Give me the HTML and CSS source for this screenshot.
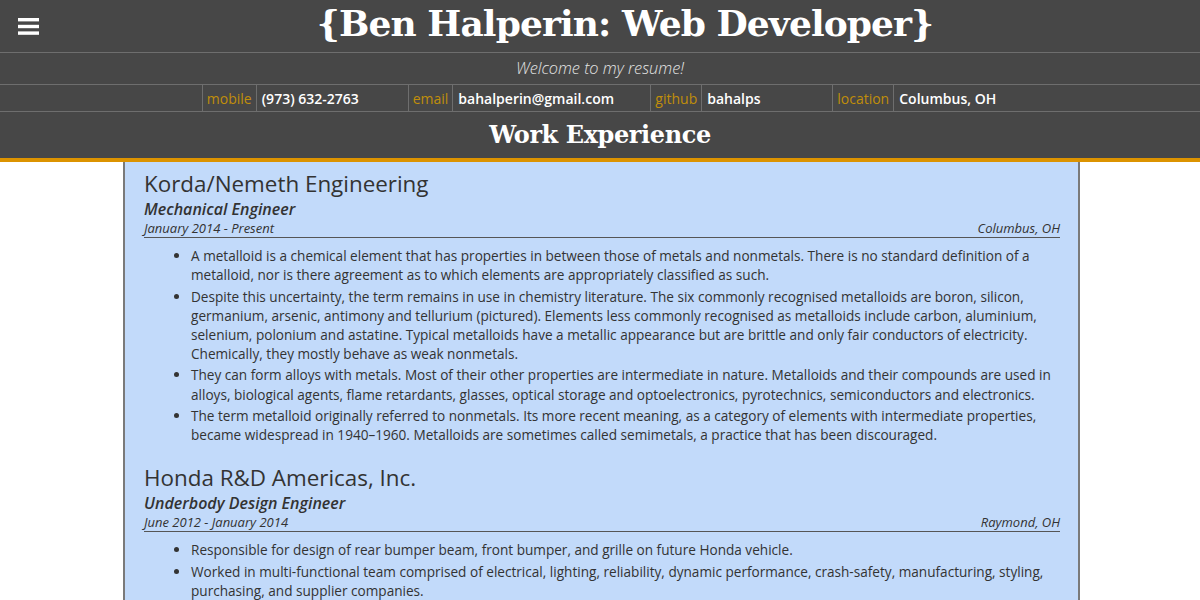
FILE: index.html
```html
<!DOCTYPE html>
<html lang="en">
<head>
<meta charset="utf-8">
<title>Ben Halperin: Web Developer</title>
<link rel="stylesheet" href="styles.css">
</head>
<body>
<header class="top">
  <div class="titlebar">
    <div class="menu">
      <svg width="21" height="18" viewBox="0 0 21 18"><rect x="0" y="0" width="21" height="3.4" fill="#fff"/><rect x="0" y="6.8" width="21" height="3.4" fill="#fff"/><rect x="0" y="13.4" width="21" height="3.4" fill="#fff"/></svg>
    </div>
    <h1 class="title">{Ben Halperin: Web Developer}</h1>
  </div>
  <div class="welcome">Welcome to my resume!</div>
  <div class="contact-row">
    <table class="contact">
      <tr>
        <td class="lab">mobile</td><td class="val v-mobile">(973) 632-2763</td>
        <td class="lab">email</td><td class="val v-email">bahalperin@gmail.com</td>
        <td class="lab">github</td><td class="val v-github">bahalps</td>
        <td class="lab">location</td><td class="val v-loc">Columbus, OH</td>
      </tr>
    </table>
  </div>
  <h2 class="section-title">Work Experience</h2>
</header>
<main class="panel">
  <section class="job">
    <h3 class="company">Korda/Nemeth Engineering</h3>
    <div class="role">Mechanical Engineer</div>
    <div class="meta"><span>January 2014 - Present</span><span>Columbus, OH</span></div>
    <ul class="duties">
      <li>A metalloid is a chemical element that has properties in between those of metals and nonmetals. There is no standard definition of a metalloid, nor is there agreement as to which elements are appropriately classified as such.</li>
      <li>Despite this uncertainty, the term remains in use in chemistry literature. The six commonly recognised metalloids are boron, silicon, germanium, arsenic, antimony and tellurium (pictured). Elements less commonly recognised as metalloids include carbon, aluminium, selenium, polonium and astatine. Typical metalloids have a metallic appearance but are brittle and only fair conductors of electricity. Chemically, they mostly behave as weak nonmetals.</li>
      <li>They can form alloys with metals. Most of their other properties are intermediate in nature. Metalloids and their compounds are used in alloys, biological agents, flame retardants, glasses, optical storage and optoelectronics, pyrotechnics, semiconductors and electronics.</li>
      <li>The term metalloid originally referred to nonmetals. Its more recent meaning, as a category of elements with intermediate properties, became widespread in 1940–1960. Metalloids are sometimes called semimetals, a practice that has been discouraged.</li>
    </ul>
  </section>
  <section class="job">
    <h3 class="company">Honda R&amp;D Americas, Inc.</h3>
    <div class="role">Underbody Design Engineer</div>
    <div class="meta"><span>June 2012 - January 2014</span><span>Raymond, OH</span></div>
    <ul class="duties">
      <li>Responsible for design of rear bumper beam, front bumper, and grille on future Honda vehicle.</li>
      <li>Worked in multi-functional team comprised of electrical, lighting, reliability, dynamic performance, crash-safety, manufacturing, styling, purchasing, and supplier companies.</li>
      <li>Designed parts using CATIA V5 and managed part release and change processes.</li>
    </ul>
  </section>
</main>
</body>
</html>
```
FILE: styles.css
```css
html, body {
  margin: 0;
  padding: 0;
  background: #fff;
  font-family: "Open Sans", "Liberation Sans", sans-serif;
}
.top {
  background: #474747;
  color: #fff;
  border-bottom: 4px solid #dc9300;
}
.titlebar {
  display: grid;
  grid-template-columns: 50px 1fr;
  align-items: center;
  height: 52px;
  border-bottom: 1px solid #6e6e6e;
}
.menu {
  padding-left: 18px;
  display: flex;
  align-items: center;
  height: 52px;
  padding-top: 1px;
  box-sizing: border-box;
}
.menu svg { display: block; }
.title {
  margin: 0;
  text-align: center;
  font-family: "DejaVu Serif", serif;
  font-weight: bold;
  font-size: 36px;
  letter-spacing: -0.9px;
  line-height: 44px;
  padding-bottom: 6px;
  white-space: nowrap;
}
.welcome {
  height: 31px;
  line-height: 30px;
  text-align: center;
  font-style: italic;
  font-weight: 300;
  font-size: 16.3px;
  color: #e4e4e4;
  border-bottom: 1px solid #6e6e6e;
}
.contact-row {
  border-bottom: 1px solid #6e6e6e;
  display: flex;
  justify-content: center;
}
.contact {
  border-collapse: collapse;
  margin-left: 2px;
}
.contact td {
  height: 26px;
  padding: 0 4px;
  font-size: 14px;
  border-left: 1px solid #6e6e6e;
  white-space: nowrap;
}
.contact .lab {
  color: #c08e0a;
}
.contact .val {
  color: #fff;
  font-weight: 600;
  padding-left: 5px;
}
.v-mobile { width: 142px; }
.v-email { width: 188px; }
.v-github { width: 121px; }
.v-loc { width: 95px; }
.section-title {
  margin: 0;
  height: 46px;
  line-height: 46px;
  text-align: center;
  font-family: "DejaVu Serif", serif;
  font-weight: bold;
  font-size: 24px;
  letter-spacing: -0.4px;
}
.panel {
  box-sizing: border-box;
  width: 957px;
  margin-left: 123px;
  background: #c2dafa;
  border-left: 2px solid #7a7a7a;
  border-right: 2px solid #7a7a7a;
  padding: 7px 18px 10px 19px;
  color: #333;
}
.job { margin-bottom: 19px; }
.company {
  margin: 0;
  font-size: 22.4px;
  font-weight: 500;
  line-height: 30px;
}
.role {
  font-size: 16px;
  font-weight: 600;
  font-style: italic;
  line-height: 20px;
}
.meta {
  display: flex;
  justify-content: space-between;
  font-size: 13px;
  font-style: italic;
  line-height: 18px;
  border-bottom: 1px solid #555;
}
.duties {
  margin: 8px 0 0;
  padding-left: 47px;
  font-size: 13.6px;
  line-height: 19.2px;
}
.duties li { margin-bottom: 2.1px; }
```
